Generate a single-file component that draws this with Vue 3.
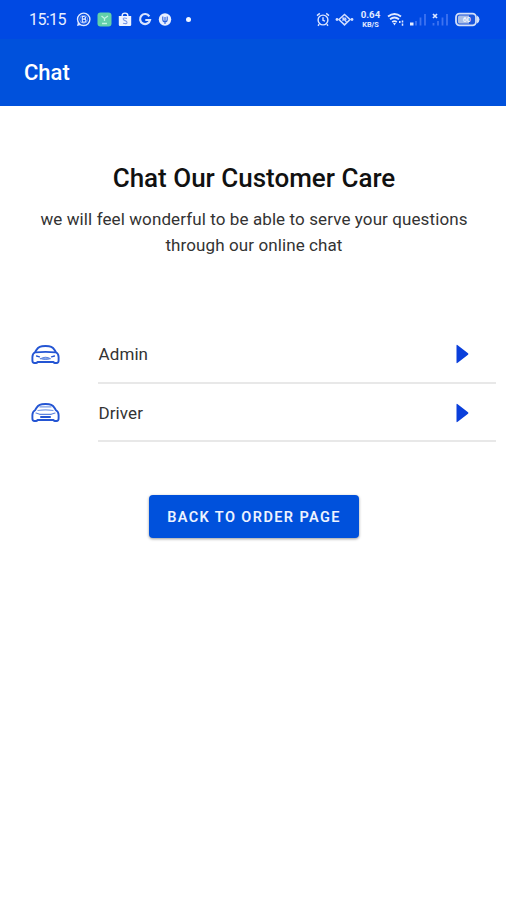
<script setup>
const contacts = [{ name: 'Admin' }, { name: 'Driver' }]
</script>

<template>
  <div class="screen">
    <header>
      <div class="status">
        <span class="time">15:15</span>
        <div class="notices">
          <svg width="15" height="15" viewBox="0 0 15 15" fill="none" stroke="#dfe8ff">
            <circle cx="7.7" cy="7.3" r="6.2" stroke-width="1.4" />
            <circle cx="7.7" cy="7.3" r="4" stroke-width=".7" opacity=".7" />
            <path d="M1 14l1-4 3 3z" fill="#dfe8ff" stroke="none" />
            <path d="M6.3 10.2V4.5h1.5q1.8 0 1.8 1.3T7.8 7.2H6.5h1.6q1.9 0 1.9 1.5t-1.9 1.5z" stroke-width="1.2" />
          </svg>
          <svg width="15" height="15" viewBox="0 0 15 15">
            <rect x=".5" y=".5" width="14" height="14" rx="3" fill="#62d1aa" />
            <path d="M4.5 4l3 2.500L11 4M7.500 7v2M5 11.500h5" fill="none" stroke="#c0f5e2" stroke-width="1.3" />
          </svg>
          <svg width="14" height="15" viewBox="0 0 14 15">
            <path d="M4.2 5V3.5q0-2.4 2.8-2.4t2.8 2.4V5" fill="none" stroke="#eef3ff" stroke-width="1.4" />
            <path d="M.8 4h12.4v8.7q0 1.3-1.3 1.3H2.1Q.8 14 .8 12.7z" fill="#eef3ff" />
            <path d="M9 6.4q-3.8-1.2-3.8.7 0 1 1.8 1.5 2 .6 2 1.8 0 2-4 .8" fill="none" stroke="#7c9ae8" stroke-width="1.1" />
          </svg>
          <svg width="14" height="15" viewBox="0 0 14 15">
            <path d="M11.3 4.3A5 5 0 1 0 12 8H7.3" fill="none" stroke="#d9e4ff" stroke-width="2.2" />
          </svg>
          <svg width="14" height="15" viewBox="0 0 14 15">
            <circle cx="7" cy="7.5" r="6.2" fill="#e6edff" />
            <path d="M4.8 4.5v3q0 2.3 2.2 2.3t2.2-2.3v-3M7 5v7" fill="none" stroke="#2860df" stroke-width="1.1" />
          </svg>
          <i class="dot"></i>
        </div>
        <div class="system">
          <svg width="14" height="15" viewBox="0 0 14 15" fill="none" stroke="#dbe5ff" stroke-width="1.4">
            <circle cx="7" cy="8" r="4.9" />
            <path d="M7 5.2V8.3l2 .8M1 3.6L3.8 1.4M13 3.6l-2.8-2.2M3.2 12.2L2 13.7M10.8 12.2l1.2 1.5" />
          </svg>
          <svg class="eye" width="19" height="15" viewBox="0 0 19 15" fill="none" stroke="#d1ddff" stroke-width="1.6">
            <path d="M4 7.5L9.5 2.5L15 7.5L9.5 12.8z" />
            <path d="M7.5 5.5l4 4.5M8 9V6.5q3-1.5 3 1.5" stroke-width="1.2" />
            <circle cx="2" cy="7.5" r="1.4" fill="#d1ddff" stroke="none" />
            <circle cx="17" cy="7.5" r="1.4" fill="#d1ddff" stroke="none" />
          </svg>
          <svg class="speed" width="21" height="21" viewBox="0 0 21 21">
            <text class="rate" x="10.5" y="9" text-anchor="middle" textLength="19.5" lengthAdjust="spacingAndGlyphs">0.64</text>
            <text class="unit" x="10.5" y="17.7" text-anchor="middle" textLength="16.5" lengthAdjust="spacingAndGlyphs">KB/S</text>
          </svg>
          <svg class="wifi" width="17" height="15" viewBox="0 0 17 15" fill="none" stroke="#e2eaff" stroke-width="1.8">
            <path d="M1 4.5q6.5-5 13 0M3 7.3q4.5-3.5 9 0M5.2 10q2.3-1.7 4.6 0" />
            <path d="M6 11h3l-1.5 2.5z" fill="#e2eaff" stroke="none" />
            <path d="M12.8 9v2M15.5 8.5v2M15.5 11.5v2.3" stroke-width="1.5" />
          </svg>
          <svg class="bars" width="17" height="15" viewBox="0 0 17 15">
            <path d="M0 10.5h3.5v3H0z" fill="#e6edff" />
            <path d="M6 9v4.5M10.5 5.5v8M15 2v11.5" stroke="#3e73f0" stroke-width="1.8" />
          </svg>
          <svg class="bars" width="17" height="15" viewBox="0 0 17 15">
            <path d="M1 2l4 4M5 2L1 6" stroke="#dce6ff" stroke-width="1.7" />
            <path d="M1.5 11v2.5M6 9v4.5M10.5 5.5v8M15 2v11.5" stroke="#3e73f0" stroke-width="1.8" />
          </svg>
          <svg class="battery" width="25" height="15" viewBox="0 0 25 15">
            <rect x="1" y="1.7" width="20" height="11.6" rx="3.5" fill="#1c57dc" stroke="#d3dff8" stroke-width="1.8" />
            <path d="M4.5 3.5H14v8H4.5Q3 11.5 3 10V5q0-1.5 1.5-1.5z" fill="#a9bde5" />
            <path d="M22 3.5q2.5 1.5 2.5 4t-2.5 4z" fill="#d3dff8" />
            <text class="charge" x="11.8" y="10.3" text-anchor="middle">60</text>
          </svg>
        </div>
      </div>
      <div class="appbar">Chat</div>
    </header>

    <main>
      <h1>Chat Our Customer Care</h1>
      <p>we will feel wonderful to be able to serve your questions<br />through our online chat</p>
      <ul>
        <li v-for="(contact, index) in contacts" :key="contact.name">
          <svg class="car" width="29" height="20" viewBox="0 0 29 20" fill="none" stroke="#2455d3" stroke-linejoin="round" stroke-linecap="round">
            <path d="M4 7.3Q5.500 4.500 7 3Q8.500 1.500 11 1.200Q14.500.8 18 1.200Q20.500 1.500 22 3Q23.500 4.500 25 7.300Q27.500 8.800 27.600 12V15.500Q27.600 18 25.500 18H24Q23 18 22.500 17H6.500Q6 18 5 18H3.500Q1.400 18 1.400 15.500V12Q1.500 8.800 4 7.300z" stroke-width="1.900" />
            <template v-if="index === 0">
              <path d="M4.500 7.300Q14.500 6.300 24.500 7.300" stroke-width="1.800" />
              <path d="M5.500 11l3 .8M23.500 11l-3 .8" stroke-width="1.300" />
              <path d="M9.500 13.700q5-3 10 0q-5 1.700-10 0z" fill="#8ba8e8" stroke="#5c83de" stroke-width="1" />
            </template>
            <template v-else>
              <path d="M9 3.900h11M7 7.500Q14.500 6.200 22 7.500" stroke="#7c9de6" stroke-width="1.200" />
              <path d="M5 10l3.800 1.300h11.400L24 10" stroke="#5c83de" stroke-width="1.200" />
              <path d="M10 14h9" stroke-width="2" />
            </template>
          </svg>
          <div class="entry">
            <span>{{ contact.name }}</span>
            <svg width="13" height="20" viewBox="0 0 13 20">
              <path d="M.5 1.7Q.5 .2 1.7 1.2L12 9.2Q12.900 10 12 10.8L1.7 18.8Q.5 19.8 .5 18.3z" fill="#0a3fdb" />
            </svg>
          </div>
        </li>
      </ul>
      <button>BACK TO ORDER PAGE</button>
    </main>
  </div>
</template>

<style>
body {
  margin: 0;
  background: #fff;
}
</style>

<style scoped>
.screen {
  width: 506px;
  height: 900px;
  overflow: hidden;
  background: #fff;
  font-family: Roboto, sans-serif;
}
header {
  height: 106px;
  background: #0051dc;
  color: #fff;
}
.status {
  display: flex;
  align-items: center;
  height: 39px;
  background: #0049e3;
  box-sizing: border-box;
  padding: 0 26px 0 29px;
}
svg {
  display: block;
  flex: none;
}
.time {
  width: 46.5px;
  font-size: 16px;
  line-height: 20px;
  letter-spacing: -0.6px;
  color: #e7eeff;
}
.notices,
.system {
  display: flex;
  align-items: center;
}
.notices {
  gap: 6px;
}
.dot {
  width: 5px;
  height: 5px;
  margin-left: 8px;
  border-radius: 50%;
  background: #f2f6ff;
}
.system {
  margin-left: auto;
}
.eye {
  margin-left: 5px;
}
.speed {
  margin-left: 6px;
  fill: #e2eaff;
}
.rate {
  font: 700 8.5px Roboto, sans-serif;
}
.unit {
  font: 700 7px Roboto, sans-serif;
}
.wifi {
  margin-left: 6px;
}
.bars {
  margin-left: 5.5px;
}
.battery {
  margin-left: 6px;
}
.charge {
  font: 700 7px Roboto, sans-serif;
  fill: #f0f5ff;
}
.appbar {
  display: flex;
  align-items: center;
  height: 66px;
  padding-left: 24px;
  font-size: 22px;
  font-weight: 500;
}
main {
  display: flex;
  flex-direction: column;
  align-items: center;
}
h1 {
  margin: 56px 0 0;
  padding-left: 2px;
  font-size: 26px;
  line-height: 32px;
  font-weight: 500;
  color: #111;
}
p {
  margin: 12px 0 0;
  padding-left: 2px;
  font-size: 17px;
  line-height: 26px;
  letter-spacing: 0.1px;
  text-align: center;
  white-space: nowrap;
  color: #333;
}
ul {
  align-self: stretch;
  margin: 67px 10px 0 31px;
  padding: 0;
  list-style: none;
}
li {
  display: flex;
  align-items: center;
  height: 58.5px;
}
.car {
  margin-top: 1px;
}
.entry {
  display: flex;
  flex: 1;
  align-items: center;
  justify-content: space-between;
  box-sizing: border-box;
  height: 100%;
  margin-left: 38px;
  padding: 1.5px 27px 0 0.5px;
  border-bottom: 2px solid #e8e8e8;
  font-size: 17px;
  letter-spacing: 0.1px;
  color: #333;
}
button {
  width: 210px;
  height: 43px;
  margin: 53px 0 0 2px;
  padding: 1px 0 0;
  border: 0;
  border-radius: 4px;
  background: #0051dc;
  box-shadow: 0 1px 3px rgba(0, 0, 0, 0.4);
  color: #edf3ff;
  font: 600 14.5px Roboto, sans-serif;
  letter-spacing: 1.4px;
}
</style>
